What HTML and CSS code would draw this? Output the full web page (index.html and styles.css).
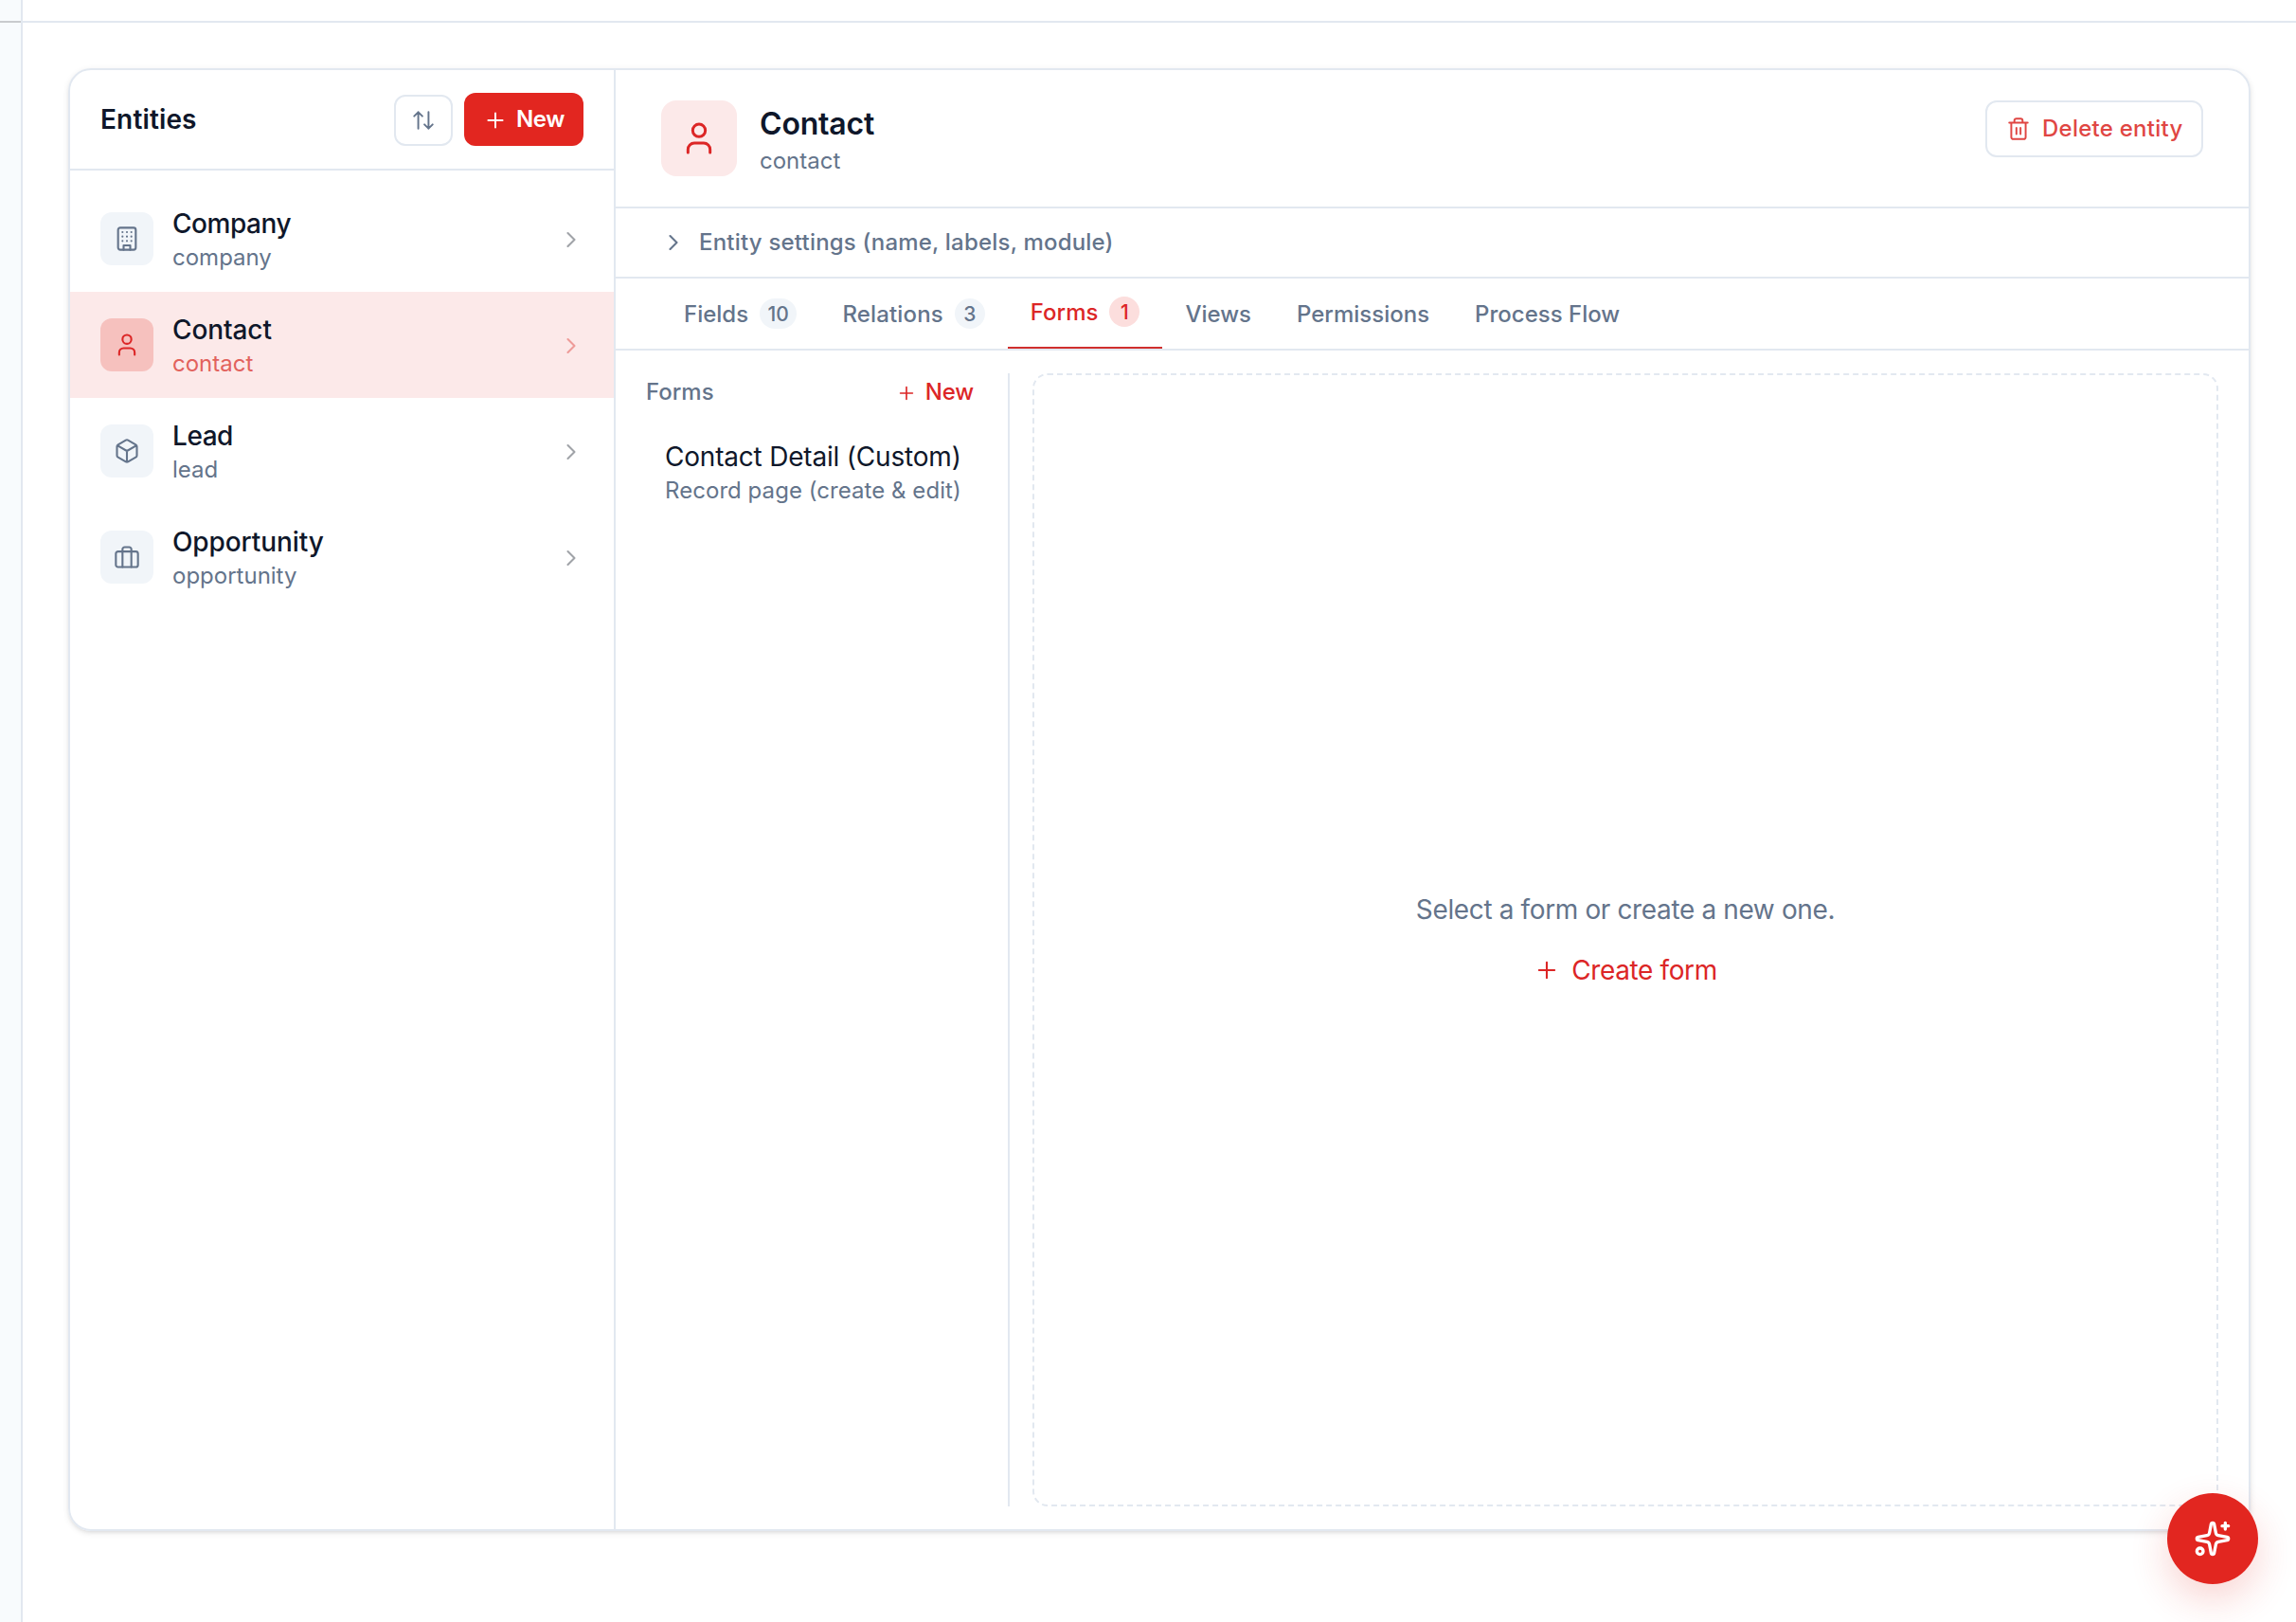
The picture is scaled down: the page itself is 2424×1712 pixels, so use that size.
FILE: index.html
```html
<!DOCTYPE html>
<html lang="en">
<head>
<meta charset="utf-8">
<title>Entities</title>
<link rel="stylesheet" href="styles.css">
</head>
<body>
<svg width="0" height="0" class="sprite" aria-hidden="true">
  <symbol id="plus" viewBox="0 0 24 24"><path d="M5 12h14M12 5v14"/></symbol>
  <symbol id="sort" viewBox="0 0 24 24"><path d="m21 16-4 4-4-4M17 20V4M3 8l4-4 4 4M7 4v16"/></symbol>
  <symbol id="chevron" viewBox="0 0 24 24"><path d="m9 18 6-6-6-6"/></symbol>
  <symbol id="user" viewBox="0 0 24 24"><path d="M19 21v-2a4 4 0 0 0-4-4H9a4 4 0 0 0-4 4v2"/><circle cx="12" cy="7" r="4"/></symbol>
  <symbol id="building" viewBox="0 0 24 24"><rect width="16" height="20" x="4" y="2" rx="2"/><path d="M9 22v-4h6v4M8 6h.01M16 6h.01M12 6h.01M12 10h.01M12 14h.01M16 10h.01M16 14h.01M8 10h.01M8 14h.01"/></symbol>
  <symbol id="box" viewBox="0 0 24 24"><path d="M21 8a2 2 0 0 0-1-1.73l-7-4a2 2 0 0 0-2 0l-7 4A2 2 0 0 0 3 8v8a2 2 0 0 0 1 1.73l7 4a2 2 0 0 0 2 0l7-4A2 2 0 0 0 21 16ZM3.3 7l8.7 5 8.7-5M12 22V12"/></symbol>
  <symbol id="briefcase" viewBox="0 0 24 24"><rect width="20" height="14" x="2" y="7" rx="2"/><path d="M16 21V5a2 2 0 0 0-2-2h-4a2 2 0 0 0-2 2v16"/></symbol>
  <symbol id="trash" viewBox="0 0 24 24"><path d="M3 6h18M19 6v14a2 2 0 0 1-2 2H7a2 2 0 0 1-2-2V6M8 6V4a2 2 0 0 1 2-2h4a2 2 0 0 1 2 2v2M10 11v6M14 11v6"/></symbol>
  <symbol id="sparkles" viewBox="0 0 24 24"><path d="M11.017 2.814a1 1 0 0 1 1.966 0l1.051 5.558a2 2 0 0 0 1.594 1.594l5.558 1.051a1 1 0 0 1 0 1.966l-5.558 1.051a2 2 0 0 0-1.594 1.594l-1.051 5.558a1 1 0 0 1-1.966 0l-1.051-5.558a2 2 0 0 0-1.594-1.594l-5.558-1.051a1 1 0 0 1 0-1.966l5.558-1.051a2 2 0 0 0 1.594-1.594zM20 2v4M22 4h-4"/><circle cx="4" cy="20" r="2"/></symbol>
</svg>
<div class="app">
  <aside class="rail"><div class="rail-top"></div></aside>
  <div class="page">
    <header class="topbar"></header>
    <main class="card">
      <section class="entities">
        <div class="entities-head">
          <h2>Entities</h2>
          <button class="sort-btn"><svg class="icon"><use href="#sort"/></svg></button>
          <button class="new-btn"><svg class="icon"><use href="#plus"/></svg>New</button>
        </div>
        <div class="entity-list">
          <div class="entity"><span class="tile"><svg class="icon i28"><use href="#building"/></svg></span><div class="names"><b class="tight">Company</b><span>company</span></div><svg class="icon i28 go"><use href="#chevron"/></svg></div>
          <div class="entity active"><span class="tile"><svg class="icon i28"><use href="#user"/></svg></span><div class="names"><b>Contact</b><span>contact</span></div><svg class="icon i28 go"><use href="#chevron"/></svg></div>
          <div class="entity"><span class="tile"><svg class="icon i28"><use href="#box"/></svg></span><div class="names"><b class="tight">Lead</b><span>lead</span></div><svg class="icon i28 go"><use href="#chevron"/></svg></div>
          <div class="entity"><span class="tile"><svg class="icon i28"><use href="#briefcase"/></svg></span><div class="names"><b>Opportunity</b><span>opportunity</span></div><svg class="icon i28 go"><use href="#chevron"/></svg></div>
        </div>
      </section>
      <section class="detail">
        <div class="detail-head">
          <span class="hero"><svg class="icon"><use href="#user"/></svg></span>
          <div class="title"><h1>Contact</h1><p>contact</p></div>
          <button class="delete-btn"><svg class="icon"><use href="#trash"/></svg>Delete entity</button>
        </div>
        <div class="settings"><svg class="icon i28"><use href="#chevron"/></svg>Entity settings (name, labels, module)</div>
        <nav class="tabs">
          <a class="tab">Fields<span class="count">10</span></a>
          <a class="tab wide">Relations<span class="count">3</span></a>
          <a class="tab current">Forms<span class="count">1</span></a>
          <a class="tab">Views</a>
          <a class="tab">Permissions</a>
          <a class="tab">Process Flow</a>
        </nav>
        <div class="forms">
          <div class="form-list">
            <div class="form-list-head"><span>Forms</span><a class="add"><svg class="icon"><use href="#plus"/></svg>New</a></div>
            <div class="form-item"><b>Contact Detail (Custom)</b><span>Record page (create &amp; edit)</span></div>
          </div>
          <div class="empty">
            <p>Select a form or create a new one.</p>
            <a class="create"><svg class="icon i28"><use href="#plus"/></svg>Create form</a>
          </div>
        </div>
      </section>
    </main>
  </div>
</div>
<button class="fab"><svg class="icon"><use href="#sparkles"/></svg></button>
</body>
</html>
```
FILE: styles.css
```css
* { box-sizing: border-box; margin: 0; padding: 0; }
body { font-family: Inter, "Liberation Sans", sans-serif; color: #0f172a; background: #fff; overflow: hidden; }
button { font: inherit; background: none; border: 0; }
h1, h2, b { font-weight: 500; }
.sprite { position: absolute; }
.icon { fill: none; stroke: currentColor; stroke-width: 1.8; stroke-linecap: round; stroke-linejoin: round; flex: none; width: 26px; height: 26px; }
.i28 { width: 28px; height: 28px; }

.app { display: flex; height: 1712px; }
.rail { width: 24px; background: #f8fbfd; border-right: 2px solid #e2e8f0; }
.rail-top { height: 24px; border-bottom: 2px solid #c9cbce; }
.page { flex: 1; display: flex; flex-direction: column; }
.topbar { height: 24px; border-bottom: 2px solid #e2e8f0; }
.card { display: flex; height: 1544px; margin: 48px 48px 0; border: 2px solid #e2e8f0; border-radius: 24px; overflow: hidden; box-shadow: 0 2px 6px rgba(0,0,0,.1), 0 2px 4px -2px rgba(0,0,0,.1); }

.entities { width: 576px; border-right: 2px solid #e2e8f0; }
.entities-head { display: flex; align-items: center; height: 106px; padding: 0 32px; border-bottom: 2px solid #e2e8f0; }
.entities-head h2 { flex: 1; font-size: 28px; font-weight: 600; letter-spacing: .15px; }
.sort-btn { display: grid; place-items: center; width: 62px; height: 54px; margin: 2px 12px 0 0; border: 2px solid #e2e8f0; border-radius: 12px; color: #64748b; }
.new-btn { display: flex; align-items: center; justify-content: center; gap: 9px; width: 126px; height: 56px; padding-bottom: 1px; border-radius: 12px; background: #e22620; color: #fff; font-size: 24px; font-weight: 600; letter-spacing: -.4px; }
.new-btn .icon { margin-top: 2px; }
.entity-list { padding-top: 16px; }
.entity { display: flex; align-items: center; gap: 20px; height: 112px; padding: 0 32px; }
.tile { display: grid; place-items: center; width: 56px; height: 56px; border-radius: 12px; background: #f1f5f9; color: #64748b; }
.names { flex: 1; display: flex; flex-direction: column; padding-top: 1px; }
.names b { font-size: 28px; line-height: 38px; letter-spacing: -.1px; }
.names .tight { letter-spacing: -.45px; }
.names span { font-size: 24px; line-height: 33px; color: #64748b; }
.go { margin: 2px -1px 0 0; color: #a0a3a8; }
.active { background: #fce9e9; }
.active .tile { background: #f6c1be; color: #dc2626; }
.active .names span { color: #e2625d; }
.active .go { color: #ee9b98; }

.detail { flex: 1; display: flex; flex-direction: column; }
.detail-head { display: flex; align-items: flex-start; height: 146px; padding: 32px 48px; border-bottom: 2px solid #e2e8f0; }
.hero { display: grid; place-items: center; width: 80px; height: 80px; margin-right: 24px; border-radius: 16px; background: #fce9e9; color: #dc2626; }
.hero .icon { width: 40px; height: 40px; }
.title { flex: 1; }
.title h1 { padding-top: 1px; font-size: 32px; line-height: 47px; font-weight: 600; letter-spacing: -.2px; }
.title p { font-size: 24px; line-height: 32px; color: #64748b; }
.delete-btn { display: flex; align-items: center; gap: 12px; width: 230px; height: 60px; padding: 0 20px 1px; border: 2px solid #e2e8f0; border-radius: 12px; color: #e04643; font-size: 24px; font-weight: 500; letter-spacing: .25px; white-space: nowrap; }
.settings { display: flex; align-items: center; gap: 13px; height: 74px; padding: 0 47px 1px; border-bottom: 2px solid #e2e8f0; color: #64748b; font-size: 24px; font-weight: 500; letter-spacing: .2px; }
.tabs { display: flex; height: 76px; padding: 0 48px; border-bottom: 2px solid #e2e8f0; }
.tab { display: flex; align-items: center; gap: 12px; padding: 0 24px; color: #64748b; font-size: 24px; font-weight: 500; }
.wide { letter-spacing: .15px; }
.current { color: #dc2626; border-bottom: 2px solid #d0302d; padding-bottom: 2px; }
.count { min-width: 32px; height: 32px; padding: 1px 8.5px 0; border-radius: 16px; background: #f1f5f9; font-size: 21px; line-height: 31px; text-align: center; letter-spacing: 0; }
.current .count { background: #fcdedd; }

.forms { flex: 1; display: flex; gap: 24px; padding: 24px 32px; }
.form-list { width: 384px; border-right: 2px solid #e2e8f0; }
.form-list-head { display: flex; justify-content: space-between; align-items: center; height: 39px; padding-right: 36px; color: #64748b; font-size: 24px; font-weight: 500; }
.add { display: flex; align-items: center; gap: 9px; color: #dc2626; letter-spacing: -.2px; }
.add .icon { width: 22px; height: 22px; margin-top: 2px; }
.form-item { display: flex; flex-direction: column; padding: 30px 20px; }
.form-item b { font-size: 28px; line-height: 38px; font-weight: 400; letter-spacing: -.2px; white-space: nowrap; }
.form-item span { font-size: 24px; line-height: 33px; color: #64748b; letter-spacing: .05px; white-space: nowrap; }
.empty { flex: 1; display: flex; flex-direction: column; align-items: center; justify-content: center; gap: 24px; border: 2px dashed #e2e8f0; border-radius: 16px; font-size: 28px; line-height: 40px; color: #64748b; letter-spacing: -.37px; }
.create { display: flex; align-items: center; gap: 12px; color: #dc2626; }

.fab { position: fixed; right: 40px; bottom: 40px; display: grid; place-items: center; width: 96px; height: 96px; border-radius: 50%; background: #e22620; color: #fff; box-shadow: 0 16px 40px rgba(226,38,32,.2); }
.fab .icon { width: 40px; height: 40px; stroke-width: 2; }
```
